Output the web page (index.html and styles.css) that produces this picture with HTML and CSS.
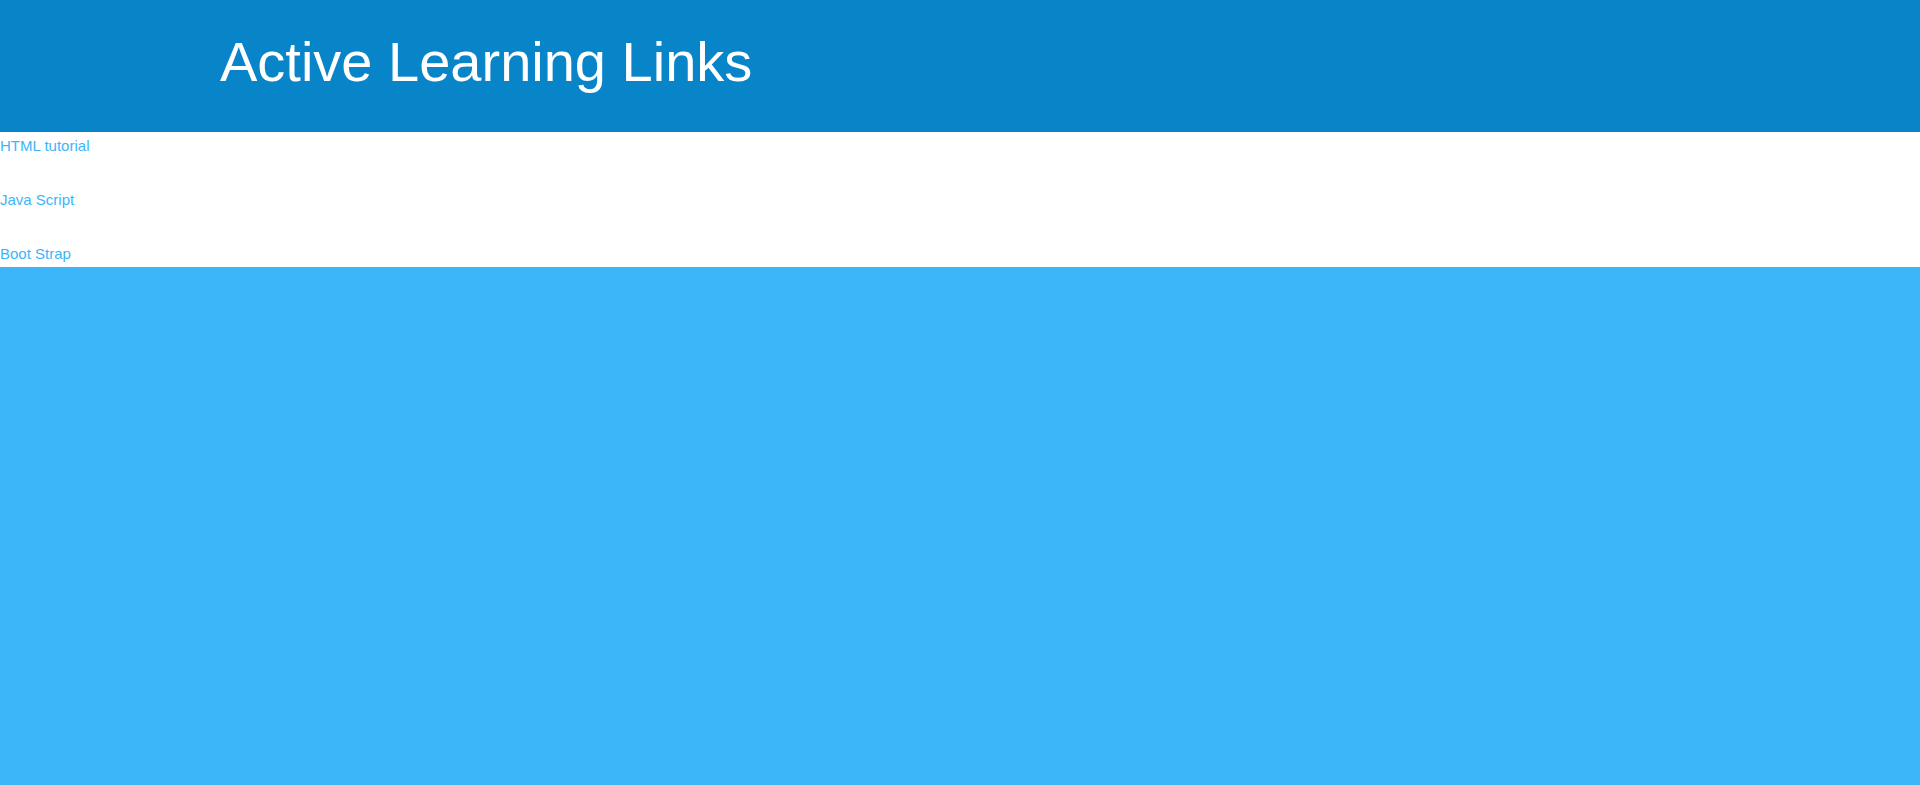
FILE: index.html
```html
<!DOCTYPE html>
<html>
<head>
<meta charset="utf-8">
<title>Active Learning Links</title>
<link rel="stylesheet" href="styles.css">
</head>
<body>
<header class="top">
  <h1 class="title">Active Learning Links</h1>
</header>
<nav class="links">
  <a class="link" href="#">HTML tutorial</a>
  <a class="link" href="#">Java Script</a>
  <a class="link" href="#">Boot Strap</a>
</nav>
<main class="content"></main>
</body>
</html>
```
FILE: styles.css
```css
html, body {
  margin: 0;
  padding: 0;
  height: 100%;
}
body {
  font-family: "Liberation Sans", Arial, sans-serif;
  background: #3cb5f9;
  display: flex;
  flex-direction: column;
}
.top {
  background: #0884c9;
  height: 132px;
  box-sizing: border-box;
  padding: 30px 0 0 220px;
}
.title {
  margin: 0;
  font-size: 56px;
  line-height: 64px;
  font-weight: normal;
  color: #ffffff;
}
.links {
  background: #ffffff;
  display: flex;
  flex-direction: column;
  gap: 37px;
  padding: 5px 0 5px 0;
}
.link {
  font-size: 15px;
  line-height: 17px;
  color: #3cb5f9;
  text-decoration: none;
}
.content {
  flex: 1;
  background: #3cb5f9;
}
```
